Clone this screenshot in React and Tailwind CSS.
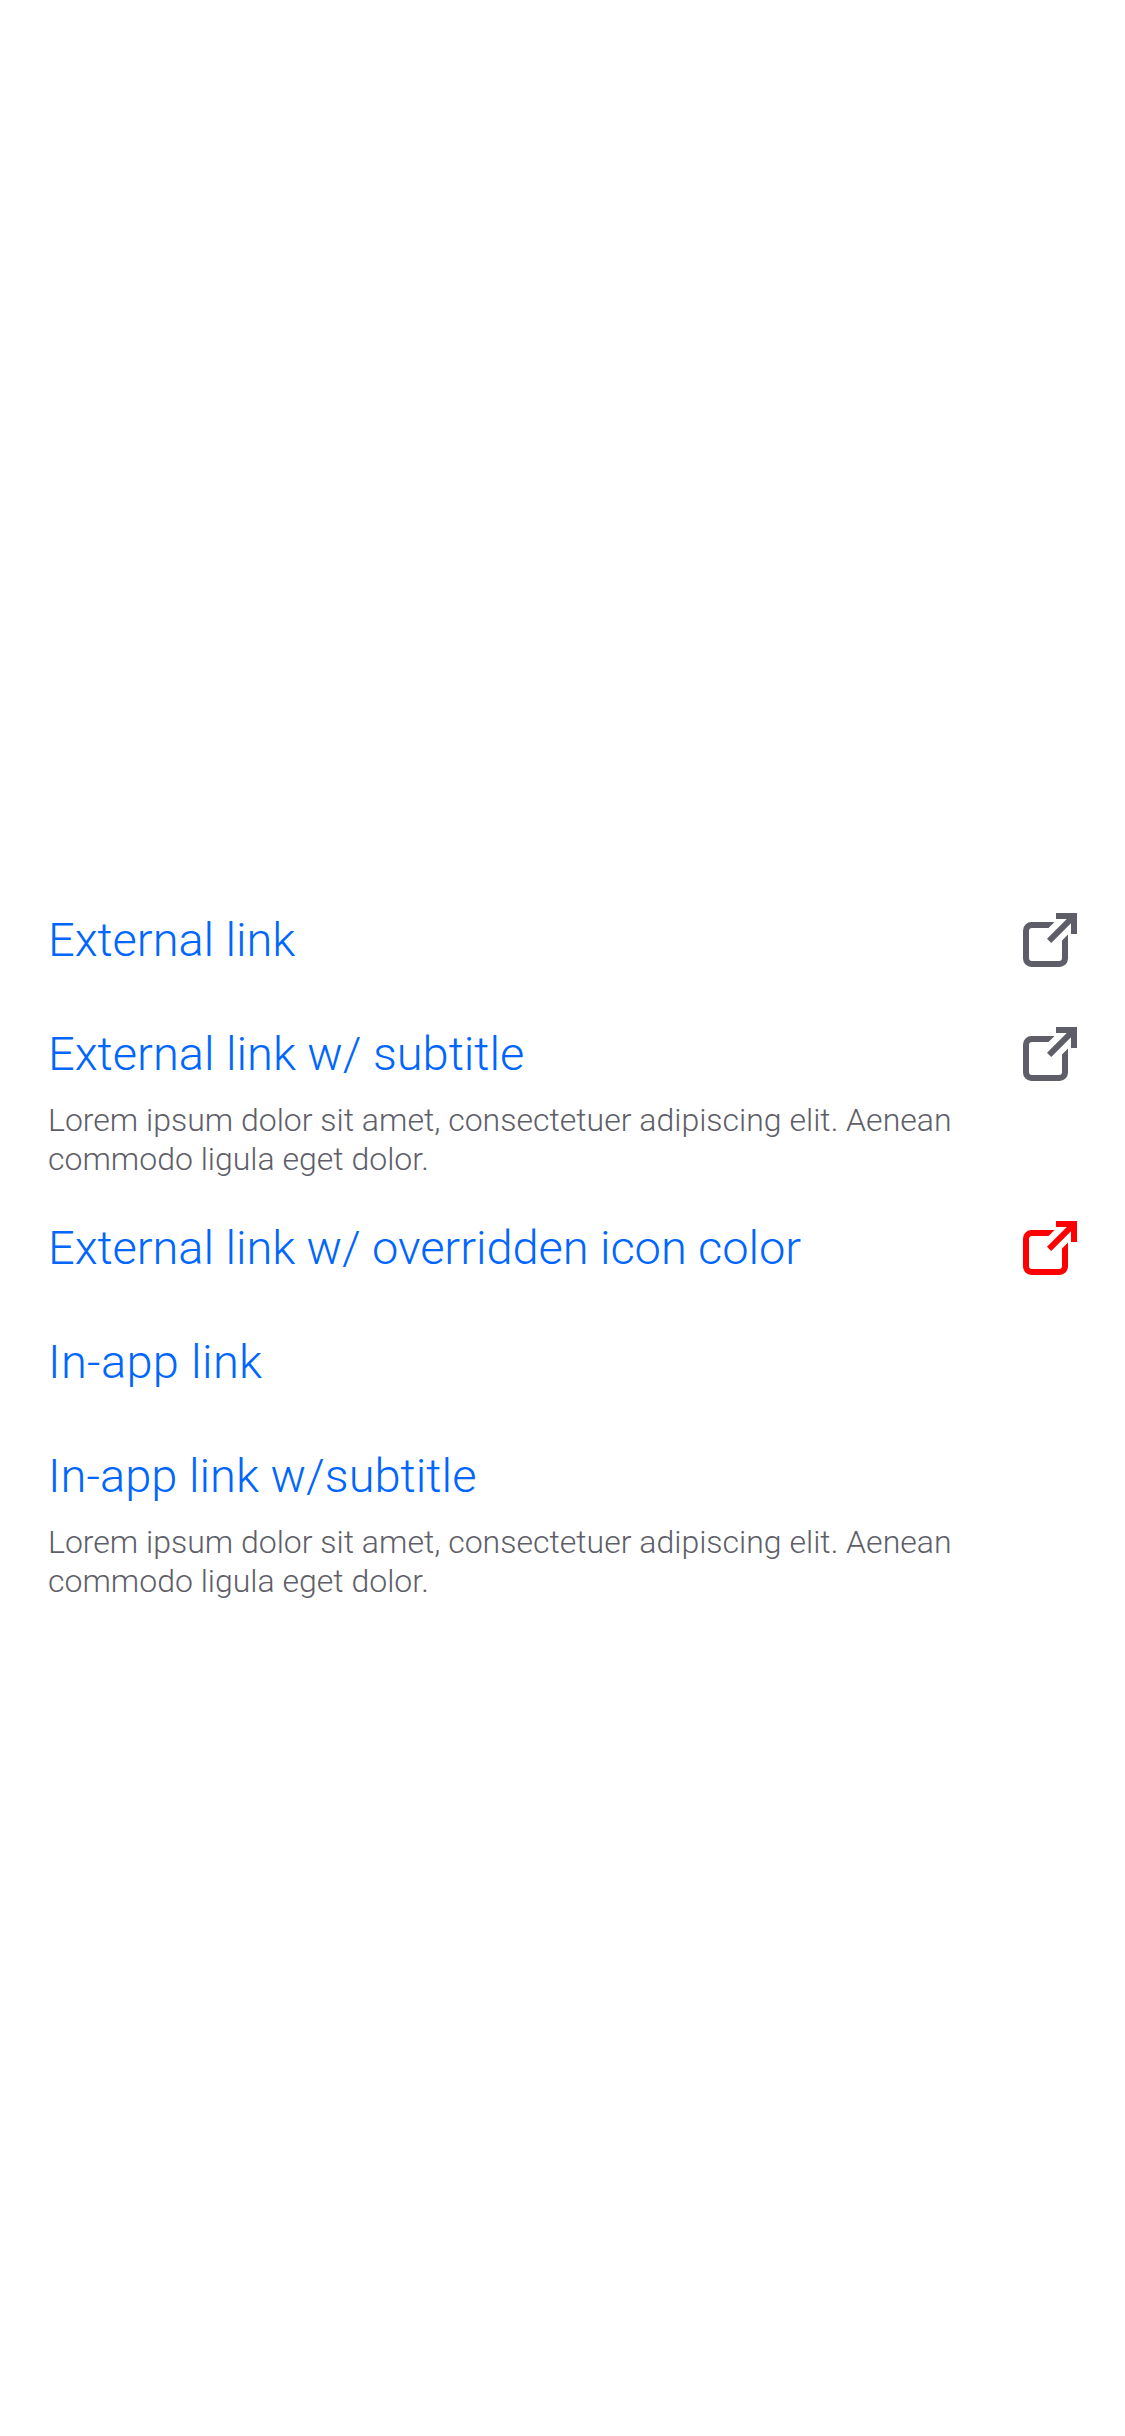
const LOREM = 'Lorem ipsum dolor sit amet, consectetuer adipiscing elit. Aenean commodo ligula eget dolor.';

const rows = [
  { title: 'External link', tracking: 'tracking-[-0.05px]', icon: 'text-[#5e5e68]' },
  { title: 'External link w/ subtitle', tracking: 'tracking-normal', icon: 'text-[#5e5e68]', subtitle: LOREM },
  { title: 'External link w/ overridden icon color', tracking: 'tracking-[-0.06px]', icon: 'text-[#ff0000]' },
  { title: 'In-app link', tracking: 'tracking-[0.35px]' },
  { title: 'In-app link w/subtitle', tracking: 'tracking-[0.04px]', subtitle: LOREM },
];

function ExternalIcon({ className }) {
  return (
    <svg viewBox="0 0 54 54" className={`size-[54px] shrink-0 ${className}`} fill="currentColor" aria-hidden="true">
      <path d="M31.5 9H8.5A8.5 8.5 0 0 0 0 17.5V45.5A8.5 8.5 0 0 0 8.5 54H36.5A8.5 8.5 0 0 0 45 45.5V21.5L39 27.5V45A3 3 0 0 1 36 48H9A3 3 0 0 1 6 45V18A3 3 0 0 1 9 15H25.5Z" />
      <path d="M33 0H54V21H48V10.2L28.2 30L24 25.8L43.8 6H33Z" />
    </svg>
  );
}

export default function App() {
  return (
    <main className="h-[2436px] w-[1125px] bg-white px-12 pt-[883px] font-[Roboto,sans-serif] font-light">
      {rows.map(({ title, tracking, icon, subtitle }) => (
        <section key={title}>
          <div className="flex h-[114px] items-center justify-between">
            <a className={`text-[47px] leading-[60px] whitespace-nowrap text-[#0066ff] ${tracking}`}>{title}</a>
            {icon && <ExternalIcon className={icon} />}
          </div>
          {subtitle && (
            <p className="-mt-[10px] h-[90px] w-[930px] text-[32px] leading-[39px] text-[#5e5e68]">{subtitle}</p>
          )}
        </section>
      ))}
    </main>
  );
}
